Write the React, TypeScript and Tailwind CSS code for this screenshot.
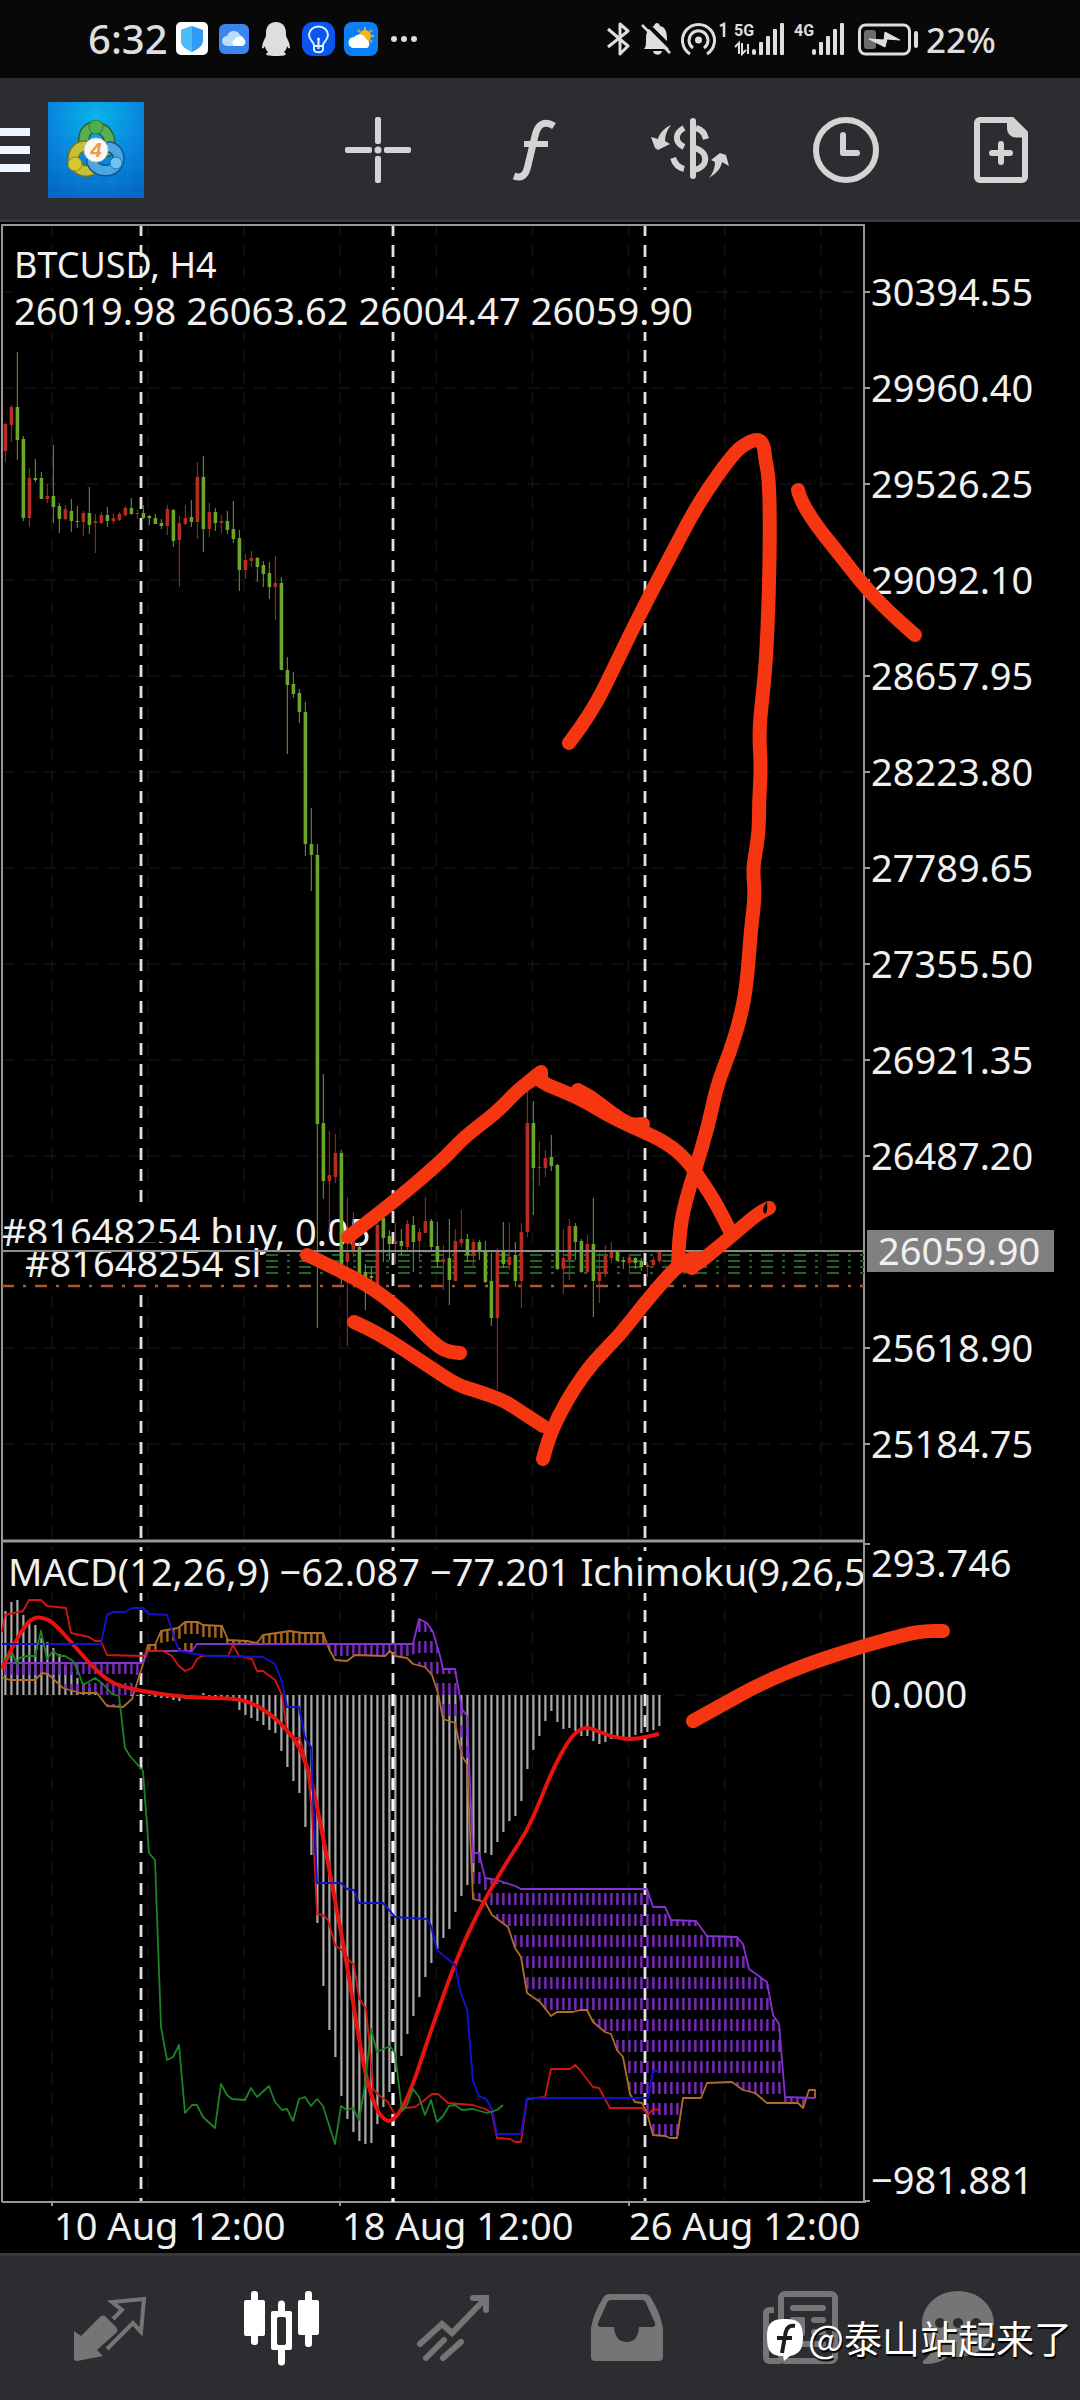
import React from 'react';

type Candle = [string, number, number, number, number];
type Point = [number, number];

// direction, high, low, body top, body bottom
const candles: Candle[] = [
  ['r', 423, 462, 424, 451], ['r', 405, 442, 407, 425], ['g', 352, 460, 407, 440], ['g', 436, 521, 439, 518],
  ['r', 468, 527, 478, 518], ['g', 459, 482, 478, 480], ['g', 472, 499, 478, 499], ['r', 484, 503, 496, 499],
  ['g', 445, 523, 496, 507], ['g', 503, 533, 506, 519], ['r', 505, 520, 509, 519], ['g', 499, 532, 511, 521],
  ['g', 506, 528, 521, 522], ['r', 511, 536, 513, 522], ['g', 487, 534, 513, 525], ['r', 514, 553, 521, 523],
  ['r', 512, 524, 515, 523], ['g', 507, 527, 515, 521], ['r', 513, 524, 518, 521], ['r', 512, 521, 514, 520],
  ['r', 506, 517, 508, 515], ['g', 498, 515, 508, 514], ['r', 510, 519, 513, 514], ['g', 505, 519, 513, 518],
  ['g', 515, 525, 516, 518], ['g', 514, 524, 518, 524], ['g', 519, 529, 523, 526], ['r', 505, 535, 509, 526],
  ['g', 509, 547, 510, 541], ['r', 516, 587, 523, 540], ['r', 505, 525, 518, 524], ['g', 500, 527, 517, 522],
  ['r', 462, 539, 477, 522], ['g', 456, 552, 477, 529], ['r', 503, 537, 512, 529], ['g', 508, 531, 512, 523],
  ['r', 515, 533, 521, 523], ['g', 511, 534, 521, 530], ['g', 501, 543, 529, 539], ['g', 530, 591, 538, 570],
  ['r', 554, 579, 560, 570], ['r', 551, 567, 558, 561], ['g', 557, 582, 558, 567], ['g', 561, 587, 565, 574],
  ['g', 562, 599, 573, 587], ['r', 556, 620, 583, 587], ['g', 577, 670, 583, 670], ['g', 657, 754, 670, 685],
  ['g', 672, 698, 684, 694], ['g', 689, 723, 693, 712], ['g', 702, 856, 712, 844], ['g', 808, 891, 844, 855],
  ['g', 844, 1328, 855, 1124], ['g', 1074, 1199, 1123, 1181], ['r', 1131, 1232, 1175, 1181], ['r', 1134, 1183, 1153, 1177],
  ['g', 1150, 1284, 1153, 1275], ['r', 1197, 1346, 1253, 1262], ['r', 1212, 1257, 1235, 1250], ['g', 1242, 1280, 1247, 1275],
  ['g', 1264, 1310, 1272, 1280], ['g', 1267, 1287, 1276, 1278], ['r', 1223, 1287, 1225, 1287], ['g', 1217, 1262, 1218, 1238],
  ['g', 1230, 1260, 1236, 1244], ['r', 1223, 1264, 1241, 1244], ['g', 1229, 1255, 1241, 1246], ['r', 1220, 1252, 1224, 1247],
  ['g', 1216, 1272, 1225, 1242], ['r', 1228, 1262, 1232, 1241], ['r', 1197, 1233, 1221, 1233], ['g', 1219, 1252, 1221, 1247],
  ['g', 1222, 1268, 1246, 1262], ['r', 1245, 1290, 1259, 1262], ['g', 1219, 1305, 1258, 1280], ['r', 1229, 1281, 1241, 1281],
  ['r', 1210, 1247, 1239, 1243], ['g', 1234, 1262, 1239, 1255], ['r', 1239, 1266, 1242, 1255], ['g', 1240, 1260, 1242, 1252],
  ['g', 1241, 1283, 1252, 1282], ['g', 1253, 1326, 1281, 1318], ['r', 1248, 1390, 1251, 1318], ['g', 1222, 1268, 1252, 1264],
  ['r', 1223, 1270, 1257, 1265], ['g', 1242, 1287, 1255, 1281], ['r', 1223, 1308, 1232, 1281], ['r', 1088, 1237, 1123, 1232],
  ['g', 1101, 1215, 1123, 1168], ['r', 1141, 1186, 1167, 1168], ['r', 1150, 1177, 1158, 1168], ['g', 1135, 1171, 1157, 1166],
  ['g', 1164, 1270, 1165, 1269], ['r', 1229, 1294, 1258, 1269], ['r', 1219, 1280, 1226, 1260], ['g', 1223, 1260, 1226, 1242],
  ['g', 1239, 1273, 1241, 1272], ['r', 1235, 1273, 1244, 1272], ['g', 1198, 1317, 1244, 1281], ['r', 1253, 1303, 1272, 1281],
  ['r', 1245, 1277, 1256, 1273], ['r', 1242, 1263, 1252, 1258], ['g', 1251, 1261, 1251, 1261], ['g', 1257, 1269, 1260, 1262],
  ['r', 1255, 1273, 1257, 1263], ['g', 1257, 1269, 1258, 1263], ['g', 1258, 1271, 1261, 1267], ['r', 1262, 1277, 1265, 1267],
  ['r', 1257, 1267, 1260, 1265], ['r', 1251, 1263, 1251, 1261],
];

const macd = [
  84, 93, 95, 80, 75, 70, 57, 53, 47, 41, 30, 23, 17, 12, 7, 3, 1,
  0, 0, 0, 0, -1, -1, -1, -1, -2, -3, -3, -5, -6, -4, -2, 0, 2, -1, -2, -3, -3, -6,
  -15, -20, -23, -26, -30, -35, -38, -56, -72, -86, -98, -132, -160, -228, -291, -335, -362, -401, -424, -437, -446,
  -449, -448, -429, -412, -397, -377, -361, -339, -321, -302, -282, -268, -254, -243, -234, -217, -201, -190, -178, -160,
  -158, -160, -147, -137, -126, -121, -106, -74, -55, -41, -26, -16, -27, -34, -33, -36, -41, -41, -46, -49,
  -47, -44, -44, -43, -42, -40, -38, -37, -35, -31,
];

const signal =
  '2,1669 13,1645 27,1623 34,1618 40,1617 52,1621 72,1643 90,1664 107,1680 123,1687 147,1692 190,1698 233,1698 253,1703 273,1716 287,1730 300,1747 312,1782 320,1821 333,1890 347,1964 360,2046 368,2085 377,2111 384,2119 390,2122 400,2113 413,2085 427,2042 453,1968 473,1922 493,1885 510,1857 527,1831 540,1801 553,1769 567,1743 577,1731 587,1727 600,1732 613,1737 633,1740 659,1734';

const tenkan =
  '2,1632 5,1615 23,1611 29,1600 41,1600 47,1606 66,1608 71,1633 89,1637 95,1641 101,1641 107,1655 143,1656 148,1651 163,1651 172,1656 178,1665 185,1671 192,1668 197,1659 202,1656 228,1656 233,1645 239,1656 252,1659 257,1671 263,1671 275,1680 282,1695 287,1732 295,1738 300,1738 307,1766 312,1812 317,1914 323,1915 328,1920 335,1945 343,1951 348,1959 354,1965 359,1998 366,2009 370,2050 373,2089 380,2096 388,2102 395,2115 405,2108 415,2107 422,2102 432,2094 438,2094 448,2103 473,2105 485,2109 492,2113 497,2138 510,2139 515,2142 521,2142 527,2099 545,2097 551,2069 570,2069 575,2065 580,2070 593,2087 599,2088 610,2108 642,2108 648,2115 653,2109 659,2110';

const kijun =
  '2,1644 101,1644 107,1615 113,1612 125,1612 132,1608 143,1608 149,1614 167,1615 173,1634 179,1651 207,1656 263,1657 275,1664 282,1682 287,1707 299,1707 305,1738 311,1747 317,1883 341,1883 347,1889 354,1890 359,1903 383,1903 395,1917 427,1919 431,1926 437,1950 455,1965 461,1994 467,2009 473,2081 479,2096 486,2099 492,2109 497,2134 521,2134 527,2098 648,2098 653,2071 659,2071';

const chikou =
  '2,1660 7,1658 13,1654 17,1665 19,1658 28,1656 35,1656 41,1631 47,1659 53,1651 59,1656 65,1656 73,1661 78,1671 83,1685 95,1678 103,1684 112,1694 119,1696 125,1748 130,1756 143,1771 149,1853 155,1860 161,2027 167,2060 173,2057 179,2045 185,2113 192,2105 197,2105 203,2117 215,2128 221,2084 227,2095 232,2099 245,2100 251,2088 257,2097 269,2086 275,2102 282,2110 287,2109 293,2121 299,2099 305,2097 311,2106 317,2099 323,2106 335,2144 341,2106 347,2110 353,2108 359,2120 365,2085 371,2029 377,2052 390,2046 395,2053 402,2111 407,2105 413,2089 419,2097 425,2115 431,2100 437,2122 443,2116 449,2106 455,2105 462,2110 473,2109 487,2113 497,2110 503,2105';

const senkouB: Point[] = [
  [2, 1663], [143, 1663], [148, 1651], [192, 1651], [197, 1644], [413, 1644], [419, 1619], [427, 1623], [433, 1632],
  [440, 1656], [443, 1669], [455, 1669], [462, 1709], [467, 1716], [473, 1853], [479, 1853], [485, 1878], [497, 1880],
  [515, 1886], [521, 1889], [647, 1889], [653, 1907], [665, 1907], [671, 1920], [696, 1921], [707, 1936], [737, 1937],
  [743, 1944], [749, 1969], [767, 1982], [773, 2015], [779, 2024], [785, 2097], [815, 2098],
];

const senkouA: Point[] = [
  [2, 1677], [10, 1680], [35, 1680], [42, 1673], [48, 1674], [63, 1688], [80, 1693], [97, 1693], [107, 1706], [123, 1707],
  [132, 1699], [143, 1664], [148, 1645], [155, 1645], [161, 1631], [178, 1628], [185, 1622], [198, 1622], [203, 1625],
  [222, 1626], [228, 1640], [247, 1641], [257, 1643], [263, 1635], [290, 1631], [302, 1633], [323, 1633], [329, 1649],
  [335, 1660], [347, 1661], [355, 1655], [385, 1656], [390, 1651], [395, 1656], [407, 1658], [413, 1664], [425, 1667],
  [432, 1675], [438, 1693], [443, 1719], [455, 1723], [462, 1756], [467, 1764], [473, 1899], [485, 1902], [492, 1915],
  [508, 1927], [515, 1948], [521, 1957], [527, 1993], [540, 2002], [551, 2016], [557, 2012], [573, 2012], [580, 2010],
  [587, 2010], [593, 2022], [605, 2032], [611, 2034], [617, 2050], [623, 2057], [630, 2094], [635, 2102], [642, 2103],
  [647, 2113], [653, 2135], [665, 2136], [670, 2138], [677, 2138], [683, 2098], [701, 2098], [707, 2083], [732, 2082],
  [743, 2090], [755, 2093], [767, 2103], [798, 2103], [803, 2108], [809, 2090], [815, 2090], [815, 2098],
];

const prices = [
  '30394.55', '29960.40', '29526.25', '29092.10', '28657.95', '28223.80', '27789.65',
  '27355.50', '26921.35', '26487.20', '', '25618.90', '25184.75',
];

const marks = [
  '569,743 592,713 619,657 643,608 671,555 695,509 719,473 736,451 748,442 759,439 764,446 765,458 769,478 770,526 769,594 766,662 762,701 759,732 761,768 759,802 759,831 755,856 753,870 755,897 751,928 747,982 741,1016 730,1052 717,1085 708,1127 695,1170 683,1210 679,1240 678,1267',
  '798,490 800,499 815,524 840,555 865,587 888,611 915,635',
  '348,1237 390,1205 443,1160 463,1138 497,1112 518,1090 530,1081 541,1072 540,1082 560,1090 583,1100 613,1118 640,1130 667,1143 687,1160 703,1183 717,1205 731,1233',
  '578,1090 590,1096 610,1112 630,1125 643,1124',
  '307,1255 333,1267 373,1288 403,1312 423,1333 440,1348 450,1352 460,1353',
  '354,1322 377,1332 427,1365 457,1385 477,1391 503,1400 523,1413 543,1426',
  '543,1459 548,1440 558,1417 573,1390 593,1362 620,1335 643,1305 667,1277 682,1262 700,1256 690,1270 727,1240 757,1214 769,1208',
  '693,1721 720,1706 760,1684 807,1664 860,1647 907,1634 925,1631 943,1631',
];

const candleX = (i: number) => 5.4 + i * 6;

const valueAt = (line: Point[], x: number) => {
  const i = line.findIndex((p) => p[0] >= x);
  if (i <= 0) return line[i === 0 ? 0 : line.length - 1][1];
  const [x0, y0] = line[i - 1];
  const [x1, y1] = line[i];
  return y0 + ((y1 - y0) * (x - x0)) / (x1 - x0);
};

const toPoints = (line: Point[]) => line.map((p) => p.join(',')).join(' ');

// Smooths a list of points by running quadratic curves through the midpoints
const toCurve = (points: string) => {
  const p = points.split(' ').map((s) => s.split(',').map(Number));
  let d = `M${p[0][0]} ${p[0][1]}`;
  for (let i = 1; i < p.length - 1; i++) {
    d += ` Q${p[i][0]} ${p[i][1]} ${(p[i][0] + p[i + 1][0]) / 2} ${(p[i][1] + p[i + 1][1]) / 2}`;
  }
  return `${d} L${p[p.length - 1][0]} ${p[p.length - 1][1]}`;
};

const Cloud: React.FC = () => (
  <g strokeWidth="2.4">
    {Array.from({ length: 134 }, (_, i) => {
      const x = candleX(i);
      const b = valueAt(senkouB, x);
      const a = valueAt(senkouA, x);
      const top = Math.min(a, b);
      const height = Math.abs(a - b);
      return (
        <line
          key={i}
          x1={x}
          x2={x}
          y1={top}
          y2={top + height}
          stroke={b < a ? '#7a2ac0' : '#a8691c'}
          strokeDasharray="12 9"
          strokeDashoffset={height < 30 ? 0 : (top - 1599) % 21}
        />
      );
    })}
  </g>
);

const Chart: React.FC = () => (
  <svg
    viewBox="0 222 1080 2031"
    className="block w-full bg-black font-['Noto_Sans',sans-serif] text-[38px]"
    role="img"
    aria-label="BTCUSD, H4"
  >
    <defs>
      <clipPath id="plot">
        <rect x="2" y="222" width="861" height="1980" />
      </clipPath>
    </defs>

    {/* grid */}
    <g stroke="#131313" strokeWidth="1.5" strokeDasharray="12 9">
      {Array.from({ length: 9 }, (_, i) => (
        <line key={i} x1={52 + i * 96.1} x2={52 + i * 96.1} y1="224" y2="2202" />
      ))}
      {prices.map((_, i) => (
        <line key={i} x1="2" x2="864" y1={292 + i * 96} y2={292 + i * 96} />
      ))}
      <line x1="2" x2="864" y1="1695" y2="1695" />
    </g>
    <g stroke="#e2e2e2" strokeWidth="2.8" strokeDasharray="12 9">
      <line x1="141" x2="141" y1="224" y2="2202" />
      <line x1="393" x2="393" y1="224" y2="2202" />
      <line x1="645" x2="645" y1="224" y2="2202" />
    </g>

    {/* frames */}
    <g fill="none" stroke="#989898" strokeWidth="2">
      <path d="M2 2202V225H864V2202" />
      <path d="M2 2202H866M864 1544H870M864 2201H870" />
      <path d="M2 1541H865" strokeWidth="3" />
      <path d="M52 2202V2206M340 2202V2206M629 2202V2206" />
      {prices.map((p, i) => p && <path key={p} d={`M864 ${292 + i * 96}H870`} />)}
    </g>

    {/* labels over the plot */}
    <rect x="13" y="290" width="683" height="42" fill="#000" />
    <rect x="4" y="1209" width="367" height="40" fill="#000" />
    <rect x="10" y="1551" width="852" height="42" fill="#000" />
    <g fill="#f0f0f0">
      <text x="14" y="278" fontSize="36">BTCUSD, H4</text>
      <text x="14" y="325">26019.98 26063.62 26004.47 26059.90</text>
      <text x="2" y="1246">#81648254 buy, 0.05</text>
    </g>
    <rect x="10" y="1243" width="250" height="42" fill="#000" />
    <text x="25" y="1277" fill="#f0f0f0">#81648254 sl</text>

    {/* order levels */}
    <g strokeDasharray="12 9 3 9" strokeWidth="2">
      {[1255, 1261, 1267, 1273].map((y) => (
        <line key={y} x1="266" x2="864" y1={y} y2={y} stroke="#1f6424" />
      ))}
      <line x1="2" x2="864" y1="1286" y2="1286" stroke="#b0532f" strokeWidth="2.5" />
    </g>

    {candles.map(([dir, high, low, top, bottom], i) => (
      <g key={i} fill={dir === 'r' ? '#b62c22' : '#6aa62a'}>
        <rect x={candleX(i) - 0.6} y={high} width="1.2" height={low - high} opacity="0.8" />
        <rect x={candleX(i) - 1.8} y={top} width="3.6" height={Math.max(1, bottom - top)} />
      </g>
    ))}
    <line x1="2" x2="864" y1="1251" y2="1251" stroke="#8c8c8c" strokeWidth="2" />

    {/* lower pane */}
    <g fill="#a8a8a8">
      {macd.map((v, i) => (
        <rect key={i} x={candleX(i) - 1.1} y={v > 0 ? 1695 - v : 1695} width="2.2" height={Math.abs(v)} />
      ))}
    </g>
    <line x1="393" x2="393" y1="1694" y2="2202" stroke="#fff" strokeWidth="2.8" strokeDasharray="12 9" />
    <Cloud />
    <g fill="none" strokeWidth="1.8" strokeLinejoin="round">
      <polyline points={toPoints(senkouA)} stroke="#b06c28" />
      <polyline points={toPoints(senkouB)} stroke="#8632d0" />
      <path d={toCurve(signal)} stroke="#e8120e" strokeWidth="4" />
      <polyline points={tenkan} stroke="#d21512" />
      <polyline points={kijun} stroke="#1212c8" strokeWidth="2" />
      <polyline points={chikou} stroke="#1c8424" />
    </g>
    <text x="8" y="1586" fill="#f0f0f0" clipPath="url(#plot)">
      MACD(12,26,9) −62.087 −77.201 Ichimoku(9,26,52)
    </text>

    {/* axes */}
    <g fill="#f0f0f0">
      {prices.map((p, i) => p && <text key={p} x="871" y={306 + i * 96}>{p}</text>)}
      <rect x="867" y="1230" width="187" height="42" fill="#808080" />
      <text x="878" y="1265">26059.90</text>
      <text x="871" y="1577">293.746</text>
      <text x="870" y="1708">0.000</text>
      <text x="871" y="2194">−981.881</text>
      <text x="54" y="2240">10 Aug 12:00</text>
      <text x="342" y="2240">18 Aug 12:00</text>
      <text x="629" y="2240">26 Aug 12:00</text>
    </g>

    {/* hand drawn marks */}
    <g fill="none" stroke="#f63610" strokeWidth="14" strokeLinecap="round" strokeLinejoin="round">
      {marks.map((m) => (
        <path key={m} d={toCurve(m)} />
      ))}
      <path d="M530 1081L541 1072L541 1081M684 1264L692 1268" />
    </g>
    <path d="M767 1202Q760 1210 765 1214Q768 1212 767 1202Z" fill="#000" />
  </svg>
);

const Signal: React.FC<{ label: string; data?: boolean; width: string }> = ({ label, data, width }) => (
  <svg viewBox={data ? '0 0 56 34' : '0 0 60 34'} className={`h-[34px] ${width}`} fill="#dedede" aria-hidden="true">
    <text x="0" y="14" fontSize="16" fontWeight="700" fontFamily="Roboto, sans-serif">{label}</text>
    {data && <path d="M1 25l4-4v11M8 21v11l4-4M14 22v10" stroke="#dedede" strokeWidth="2" fill="none" />}
    <rect x="18" y="27" width="4" height="6" rx="2" />
    <rect x="25" y="20" width="4" height="13" rx="1" />
    <rect x="32" y="14" width="4" height="19" rx="1" />
    <rect x="39" y="7" width="4" height="26" rx="1" />
    <rect x="46" y="1" width="4" height="32" rx="1" />
  </svg>
);

const StatusBar: React.FC = () => (
  <div className="flex h-[78px] items-center bg-[#080808] pl-[88px] pr-[84px] font-['Noto_Sans',sans-serif] font-medium text-[#dedede]">
    <span className="w-[88px] text-[40px] leading-none">6:32</span>
    <div className="flex items-center gap-2">
      <svg viewBox="0 0 34 34" className="size-[34px]" aria-hidden="true">
        <rect x="0" y="0" width="32" height="33" rx="5" fill="#fff" />
        <path d="M16 4l11 4v10c0 6-5 9-11 12C10 27 5 24 5 18V8z" fill="#2f9bf5" />
        <path d="M16 4L5 8v10c0 6 5 9 11 12z" fill="#4dbcf8" />
      </svg>
      <svg viewBox="0 0 34 34" className="size-[34px]" aria-hidden="true">
        <rect x="1" y="2" width="30" height="30" rx="6" fill="#3b86ee" />
        <path d="M9 24a5 5 0 0 1 0-10 7 7 0 0 1 13-1 6 6 0 0 1 1 11z" fill="#bcdcfb" />
        <path d="M16 24a4 4 0 0 1 1-7 5 5 0 0 1 9 0 4 4 0 0 1-2 7z" fill="#fff" />
      </svg>
      <svg viewBox="0 0 34 34" className="size-[34px]" fill="#dedede" aria-hidden="true">
        <path d="M16 0c7 0 10 5 10 11v3c2 4 4 8 4 12-1 1-2 0-3-2 0 3-2 5-3 6l2 2c0 1-2 2-10 2S6 33 6 32l2-2c-1-1-3-3-3-6-1 2-2 3-3 2 0-4 2-8 4-12v-3C6 5 9 0 16 0z" />
      </svg>
      <svg viewBox="0 0 34 34" className="size-[34px]" fill="none" stroke="#dff0ff" strokeWidth="2" aria-hidden="true">
        <rect x="0" y="0" width="33" height="34" rx="11" fill="#0b57ee" stroke="none" />
        <path d="M12 23c0-3-5-5-5-10a9 8 0 0 1 19 0c0 5-5 7-5 10v5c-1 3-8 3-9 0zM16.500 27V17M12 24h9" />
        <circle cx="16.500" cy="17" r="1.500" fill="#dff0ff" stroke="none" />
      </svg>
      <svg viewBox="0 0 34 34" className="size-[34px]" aria-hidden="true">
        <rect x="0" y="0" width="34" height="34" rx="8" fill="#0a80f8" />
        <path d="M21 5v3M28 8l-2 2M30 14h-3M14 8l2 2M28 20l-2-2" stroke="#e0a526" strokeWidth="2" />
        <circle cx="21" cy="14" r="6" fill="#f7b51c" />
        <path d="M10 26a5.500 5.500 0 0 1 0-11 7 7 0 0 1 12 2 5 5 0 0 1 1 9z" fill="#fff" />
      </svg>
      <svg viewBox="0 0 34 34" className="size-[34px]" fill="#dedede" aria-hidden="true">
        <circle cx="8" cy="17" r="3" />
        <circle cx="18" cy="17" r="3" />
        <circle cx="28" cy="17" r="3" />
      </svg>
    </div>
    <div className="ml-auto flex items-center gap-1">
      <svg viewBox="0 0 32 34" className="h-[34px] w-8" fill="none" stroke="#dedede" strokeWidth="3" aria-hidden="true">
        <path d="M4 7l20 17-8 8V2l8 7L4 25" strokeLinejoin="round" />
      </svg>
      <svg viewBox="0 0 36 34" className="h-[34px] w-9" fill="#dedede" aria-hidden="true">
        <path d="M4 27c2-2 2-5 2-10 0-8 3-12 8-13 1-4 5-4 6 0 5 1 7 5 7 13 0 5 0 8 3 10zM13 29h9c-1 5-8 5-9 0z" />
        <path d="M5 0l29 29" stroke="#080808" strokeWidth="4" />
        <path d="M2 3l28 28" stroke="#dedede" strokeWidth="2.500" />
      </svg>
      <svg viewBox="0 0 50 34" className="h-[34px] w-[50px]" fill="none" stroke="#dedede" strokeWidth="3" aria-hidden="true">
        <path d="M10 32A16 16 0 1 1 27 32M13 26A9.500 9.500 0 1 1 24 26" />
        <circle cx="18.500" cy="18" r="3.500" fill="#dedede" stroke="none" />
        <path d="M40 4l4-2v13" strokeWidth="2.500" />
      </svg>
      <Signal label="5G" data width="w-14" />
      <Signal label="4G" width="w-[60px]" />
      <svg viewBox="0 0 64 34" className="h-[34px] w-16" fill="none" stroke="#dedede" strokeWidth="3" aria-hidden="true">
        <rect x="1.500" y="3" width="50" height="29" rx="6" />
        <rect x="6" y="8" width="12" height="19" rx="3" fill="#6c6c6c" stroke="none" />
        <path d="M11 17l15 1 1-8 15 8-13-1-2 8z" fill="#dedede" stroke="#dedede" strokeWidth="1" />
        <path d="M58 11v13" strokeLinecap="round" strokeWidth="4" />
      </svg>
      <span className="w-[70px] text-center text-[35px] leading-none">22%</span>
    </div>
  </div>
);

const ToolButton: React.FC<{ label: string; children: React.ReactNode }> = ({ label, children }) => (
  <button aria-label={label} className="flex flex-1 justify-center">
    <svg viewBox="0 0 80 80" className="size-20" fill="none" stroke="#d4d4d4" strokeWidth="6" aria-hidden="true">
      {children}
    </svg>
  </button>
);

const Toolbar: React.FC = () => (
  <header className="flex h-36 items-center border-b-[3px] border-[#3b3b3b] bg-[#2c2d31] pt-[3px]">
    <div className="flex w-[300px] shrink-0 items-center gap-[18px]">
      <button aria-label="Menu" className="flex w-[30px] flex-col gap-2.5">
        <span className="h-2 bg-[#eef6ff]" />
        <span className="h-2 bg-[#eef6ff]" />
        <span className="h-2 bg-[#eef6ff]" />
      </button>
      <svg viewBox="0 0 96 96" className="size-24" aria-label="MetaTrader 4">
        <defs>
          <radialGradient id="sky" cx="0.5" cy="0.15" r="0.9">
            <stop offset="0" stopColor="#08b4ea" />
            <stop offset="0.5" stopColor="#0788de" />
            <stop offset="1" stopColor="#0568c4" />
          </radialGradient>
        </defs>
        <rect width="96" height="96" fill="url(#sky)" />
        <path d="M16 0V96M32 0V96M48 0V96M64 0V96M80 0V96M0 16H96M0 32H96M0 48H96M0 64H96M0 80H96" stroke="#fff" strokeOpacity="0.05" />
        <g fill="none" strokeWidth="9" strokeLinecap="round">
          <path d="M36 40C35 27 44 24 50 26C60 28 64 38 60 49" stroke="#27672f" strokeWidth="12" />
          <path d="M36 40C35 27 44 24 50 26C60 28 64 38 60 49" stroke="#5cae55" />
          <path d="M36 44C25 46 23 58 28 64C34 71 42 70 47 65" stroke="#77761a" strokeWidth="12" />
          <path d="M36 44C25 46 23 58 28 64C34 71 42 70 47 65" stroke="#c8c03a" />
          <path d="M62 45C71 48 73 57 68 64C62 71 48 70 44 60" stroke="#12568f" strokeWidth="12" />
          <path d="M62 45C71 48 73 57 68 64C62 71 48 70 44 60" stroke="#4aa7e0" />
        </g>
        <circle cx="48" cy="25" r="7" fill="#4fae4a" stroke="#2c7a32" />
        <circle cx="27" cy="62" r="7" fill="#d6c930" stroke="#8a8420" />
        <circle cx="68" cy="61" r="6" fill="#6fc1f0" stroke="#1c76b8" />
        <circle cx="48" cy="48" r="12" fill="#f7f7f7" stroke="#c9c9c9" />
        <text x="48" y="55" textAnchor="middle" fontSize="19" fontWeight="700" fontStyle="italic" fontFamily="Inter, sans-serif" fill="#f39a45">4</text>
      </svg>
    </div>
    <ToolButton label="Crosshair">
      <g fill="#d4d4d4" stroke="none">
        <rect x="37" y="7" width="6" height="27" rx="2" />
        <rect x="37" y="46" width="6" height="27" rx="2" />
        <rect x="7" y="37" width="27" height="6" rx="2" />
        <rect x="46" y="37" width="27" height="6" rx="2" />
        <circle cx="40" cy="40" r="3.5" />
      </g>
    </ToolButton>
    <ToolButton label="Indicators">
      <path d="M20 66C31 70 33 61 35 51L41 26C44 12 52 11 60 16" strokeWidth="7" />
      <path d="M30 34H54" />
    </ToolButton>
    <ToolButton label="Trade">
      <path d="M21 15C14 18 9 24 8 29L1 27L5 38L8 40L20 34L15 31C15 25 17 20 21 15ZM59 68C67 63 71 58 72 52L79 56L76 45L70 43L61 50L65 52C65 58 63 63 59 68Z" fill="#d4d4d4" stroke="none" />
      <path d="M34 18C25 23 24 32 34 37M23 48Q26 57 34 59M46 18Q54 20 56 29M44 38C59 41 59 57 44 60" />
      <path d="M43 11V66" strokeLinecap="round" />
    </ToolButton>
    <ToolButton label="Timeframe">
      <circle cx="40" cy="40" r="30" />
      <path d="M37 25V43H51" strokeLinecap="round" strokeLinejoin="round" />
    </ToolButton>
    <ToolButton label="New order">
      <path d="M50 10H18a3 3 0 0 0-3 3V67a3 3 0 0 0 3 3H60a3 3 0 0 0 3-3V23Z" />
      <path d="M45 12V18a9 9 0 0 0 9 9.500H63V22L51 10Z" fill="#d4d4d4" stroke="none" />
      <path d="M39 34V52M30 43H48" strokeLinecap="round" />
    </ToolButton>
  </header>
);

const NavButton: React.FC<{ label: string; children: React.ReactNode }> = ({ label, children }) => (
  <button aria-label={label} className="flex justify-center">
    <svg viewBox="0 0 96 80" className="h-20 w-24" fill="#757575" aria-hidden="true">
      {children}
    </svg>
  </button>
);

const BottomNav: React.FC = () => (
  <nav className="relative grid h-[147px] grid-cols-6 items-center border-t-[3px] border-[#38393a] bg-[#2c2d31] px-6">
    <NavButton label="Quotes">
      <path d="M12 43L19 48L38 29Q41 26 44 29L54 39Q57 42 54 45L35 62L41 68L15 73Q12 73 12 70Z" />
      <path d="M51 31L60 22L50 14L82 11L79 44L71 35L45 61" fill="none" stroke="#757575" strokeWidth="4" />
    </NavButton>
    <NavButton label="Chart">
      <g fill="#fff">
        <rect x="10" y="12" width="21" height="36" rx="2" />
        <rect x="17" y="3" width="7" height="54" rx="3" />
        <path fillRule="evenodd" d="M44 23V16a3.500 3.500 0 0 1 7 0V23H56a2 2 0 0 1 2 2V60a2 2 0 0 1-2 2H51V74a3.500 3.500 0 0 1-7 0V62H39a2 2 0 0 1-2-2V25a2 2 0 0 1 2-2ZM45 29a2 2 0 0 0-2 2V55a2 2 0 0 0 2 2H50a2 2 0 0 0 2-2V31a2 2 0 0 0-2-2Z" />
        <rect x="64" y="12" width="21" height="35" rx="2" />
        <rect x="71" y="3" width="7" height="56" rx="3" />
      </g>
    </NavButton>
    <NavButton label="Trade">
      <path d="M14 56L36 36L46 45L79 11M67 10H80V22M20 70L38 52M37 70L55 54" fill="none" stroke="#757575" strokeWidth="6" strokeLinecap="round" />
    </NavButton>
    <NavButton label="History">
      <path fillRule="evenodd" d="M32 6H66Q71 6 73 10Q82 24 85 40V69Q85 73 81 73H17Q13 73 13 69V40Q16 24 25 10Q27 6 32 6ZM33 12Q30 12 29 15L20 35Q19 39 23 39H36Q37 54 49 54Q60 54 61 39H74Q78 39 77 35L68 15Q67 12 64 12Z" />
    </NavButton>
    <NavButton label="News">
      <rect x="31" y="6" width="54" height="67" rx="4" fill="none" stroke="#757575" strokeWidth="6" />
      <path d="M24 22H20Q16 22 16 26V69Q16 73 20 73H31" fill="none" stroke="#757575" strokeWidth="6" />
      <path d="M43 20H73M64 32H73M64 44H73M43 56H73" stroke="#757575" strokeWidth="6" strokeLinecap="round" />
      <rect x="40" y="29" width="15" height="19" rx="2" />
    </NavButton>
    <NavButton label="Messages">
      <path d="M36 3C56 3 72 17 72 36S56 69 36 69Q31 69 27 68Q16 77 2 76Q0 75 1 73Q8 68 10 61Q0 50 0 36C0 17 16 3 36 3Z" />
      <g fill="#2c2d31">
        <circle cx="18" cy="35" r="5" />
        <circle cx="36" cy="35" r="5" />
        <circle cx="54" cy="35" r="5" />
      </g>
    </NavButton>
    <div className="absolute right-2 top-[54px] flex items-center gap-1 font-['Noto_Sans_CJK_SC',sans-serif] text-[38px] leading-[48px] text-white [text-shadow:1px_2px_1px_#000]">
      <svg viewBox="0 0 38 46" className="mt-2 h-[46px] w-[38px]" aria-hidden="true">
        <path d="M19 1C32 1 37 5 37 19C37 32 33 36 24 38L18 43L17 38C5 38 1 33 1 19C1 5 6 1 19 1Z" fill="#fff" />
        <path d="M29 8C22 7 20 11 19 18L16 35M11 20H26" fill="none" stroke="#1c1d20" strokeWidth="4" />
      </svg>
      <span>@泰山站起来了</span>
    </div>
  </nav>
);

const App: React.FC = () => {
  return (
    <div className="min-h-screen bg-black">
      <StatusBar />
      <Toolbar />
      <Chart />
      <BottomNav />
    </div>
  );
};

export default App;
